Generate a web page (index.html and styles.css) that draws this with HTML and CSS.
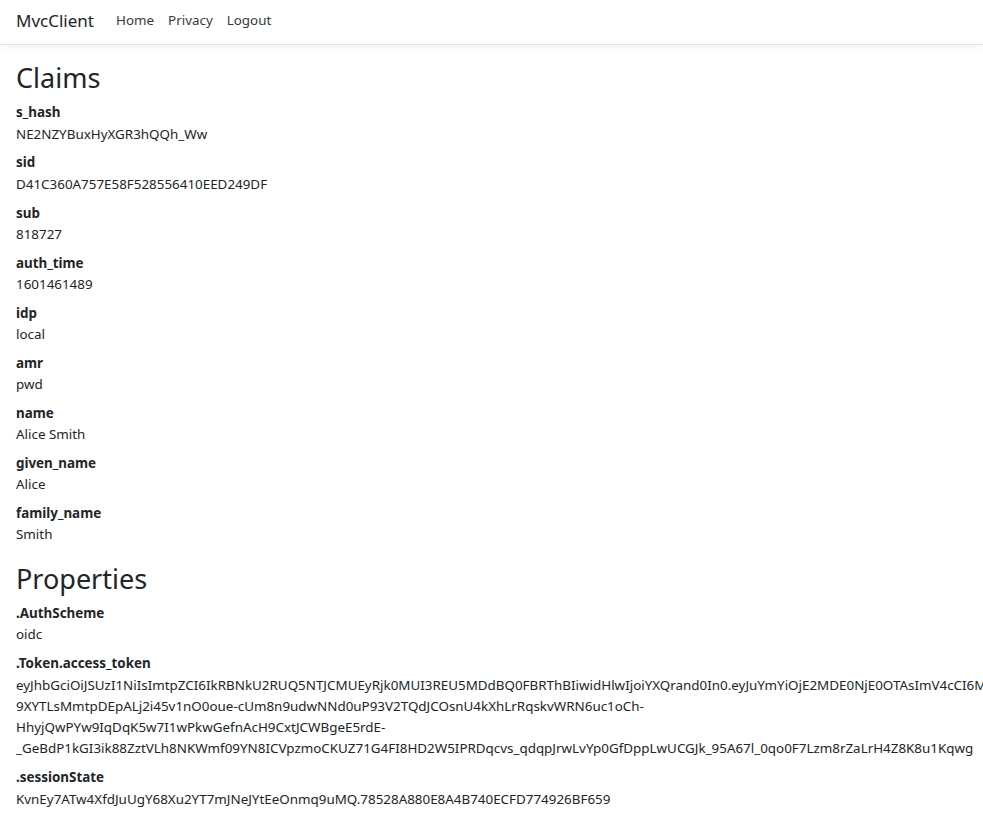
FILE: index.html
```html
<!DOCTYPE html>
<html lang="en">
<head>
    <meta charset="utf-8">
    <meta name="viewport" content="width=device-width, initial-scale=1.0">
    <title>Home Page - MvcClient</title>
    <link rel="stylesheet" href="styles.css">
</head>
<body>
    <header>
        <nav class="navbar">
            <a class="navbar-brand" href="#">MvcClient</a>
            <ul class="navbar-nav">
                <li><a class="nav-link" href="#">Home</a></li>
                <li><a class="nav-link" href="#">Privacy</a></li>
                <li><a class="nav-link" href="#">Logout</a></li>
            </ul>
        </nav>
    </header>

    <main class="container">
        <h1>Claims</h1>
        <dl>
            <dt>s_hash</dt>
            <dd>NE2NZYBuxHyXGR3hQQh_Ww</dd>
            <dt>sid</dt>
            <dd>D41C360A757E58F528556410EED249DF</dd>
            <dt>sub</dt>
            <dd>818727</dd>
            <dt>auth_time</dt>
            <dd>1601461489</dd>
            <dt>idp</dt>
            <dd>local</dd>
            <dt>amr</dt>
            <dd>pwd</dd>
            <dt>name</dt>
            <dd>Alice Smith</dd>
            <dt>given_name</dt>
            <dd>Alice</dd>
            <dt>family_name</dt>
            <dd>Smith</dd>
        </dl>

        <h1>Properties</h1>
        <dl>
            <dt>.AuthScheme</dt>
            <dd>oidc</dd>
            <dt>.Token.access_token</dt>
            <dd>eyJhbGciOiJSUzI1NiIsImtpZCI6IkRBNkU2RUQ5NTJCMUEyRjk0MUI3REU5MDdBQ0FBRThBIiwidHlwIjoiYXQrand0In0.eyJuYmYiOjE2MDE0NjE0OTAsImV4cCI6MTYwMTQ2NTA5MCwiaXNzIjoiaHR0cHM6Ly9sb2NhbGhvc3Q6NTAwMSIsImF1ZCI6ImFwaTEiLCJjbGllbnRfaWQiOiJtdmMiLCJzdWIiOiI4MTg3MjciLCJhdXRoX3RpbWUiOjE2MDE0NjE0ODksImlkcCI6ImxvY2FsIiwic2NvcGUiOlsib3BlbmlkIiwicHJvZmlsZSIsImFwaTEiXSwiYW1yIjpbInB3ZCJdfQ.LTbq7xQWd2-9XYTLsMmtpDEpALj2i45v1nO0oue-cUm8n9udwNNd0uP93V2TQdJCOsnU4kXhLrRqskvWRN6uc1oCh-HhyjQwPYw9IqDqK5w7I1wPkwGefnAcH9CxtJCWBgeE5rdE-_GeBdP1kGI3ik88ZztVLh8NKWmf09YN8ICVpzmoCKUZ71G4FI8HD2W5IPRDqcvs_qdqpJrwLvYp0GfDppLwUCGJk_95A67l_0qo0F7Lzm8rZaLrH4Z8K8u1Kqwg</dd>
            <dt>.sessionState</dt>
            <dd>KvnEy7ATw4XfdJuUgY68Xu2YT7mJNeJYtEeOnmq9uMQ.78528A880E8A4B740ECFD774926BF659</dd>
        </dl>
    </main>
</body>
</html>
```

FILE: styles.css
```css
html {
    font-size: 13.4px;
}

body {
    margin: 0;
    font-family: "Noto Sans", "Open Sans", sans-serif;
    font-size: 1rem;
    line-height: 21.3px;
    color: #212529;
    background-color: #fff;
    overflow-x: hidden;
}

a {
    text-decoration: none;
}

.navbar {
    display: flex;
    align-items: center;
    height: 42px;
    padding: 0 16px 2px;
    border-bottom: 1px solid #dee2e6;
    box-shadow: 0 .25rem .75rem rgba(0, 0, 0, .05);
    background-color: #fff;
}

.navbar-brand {
    font-size: 17px;
    color: #212529;
    margin-right: 15px;
}

.navbar-nav {
    display: flex;
    list-style: none;
    margin: 0;
    padding: 0;
}

.nav-link {
    display: block;
    padding: 8px 7px;
    color: #343a40;
}

.container {
    padding: 0 2px 0 16px;
}

h1 {
    margin: 17px 0 8px;
    font-size: 27px;
    font-weight: 400;
    line-height: 1.2;
}

dl {
    margin: 0;
}

dt {
    font-weight: 700;
}

dd {
    margin: 0 0 7.5px;
}
```
